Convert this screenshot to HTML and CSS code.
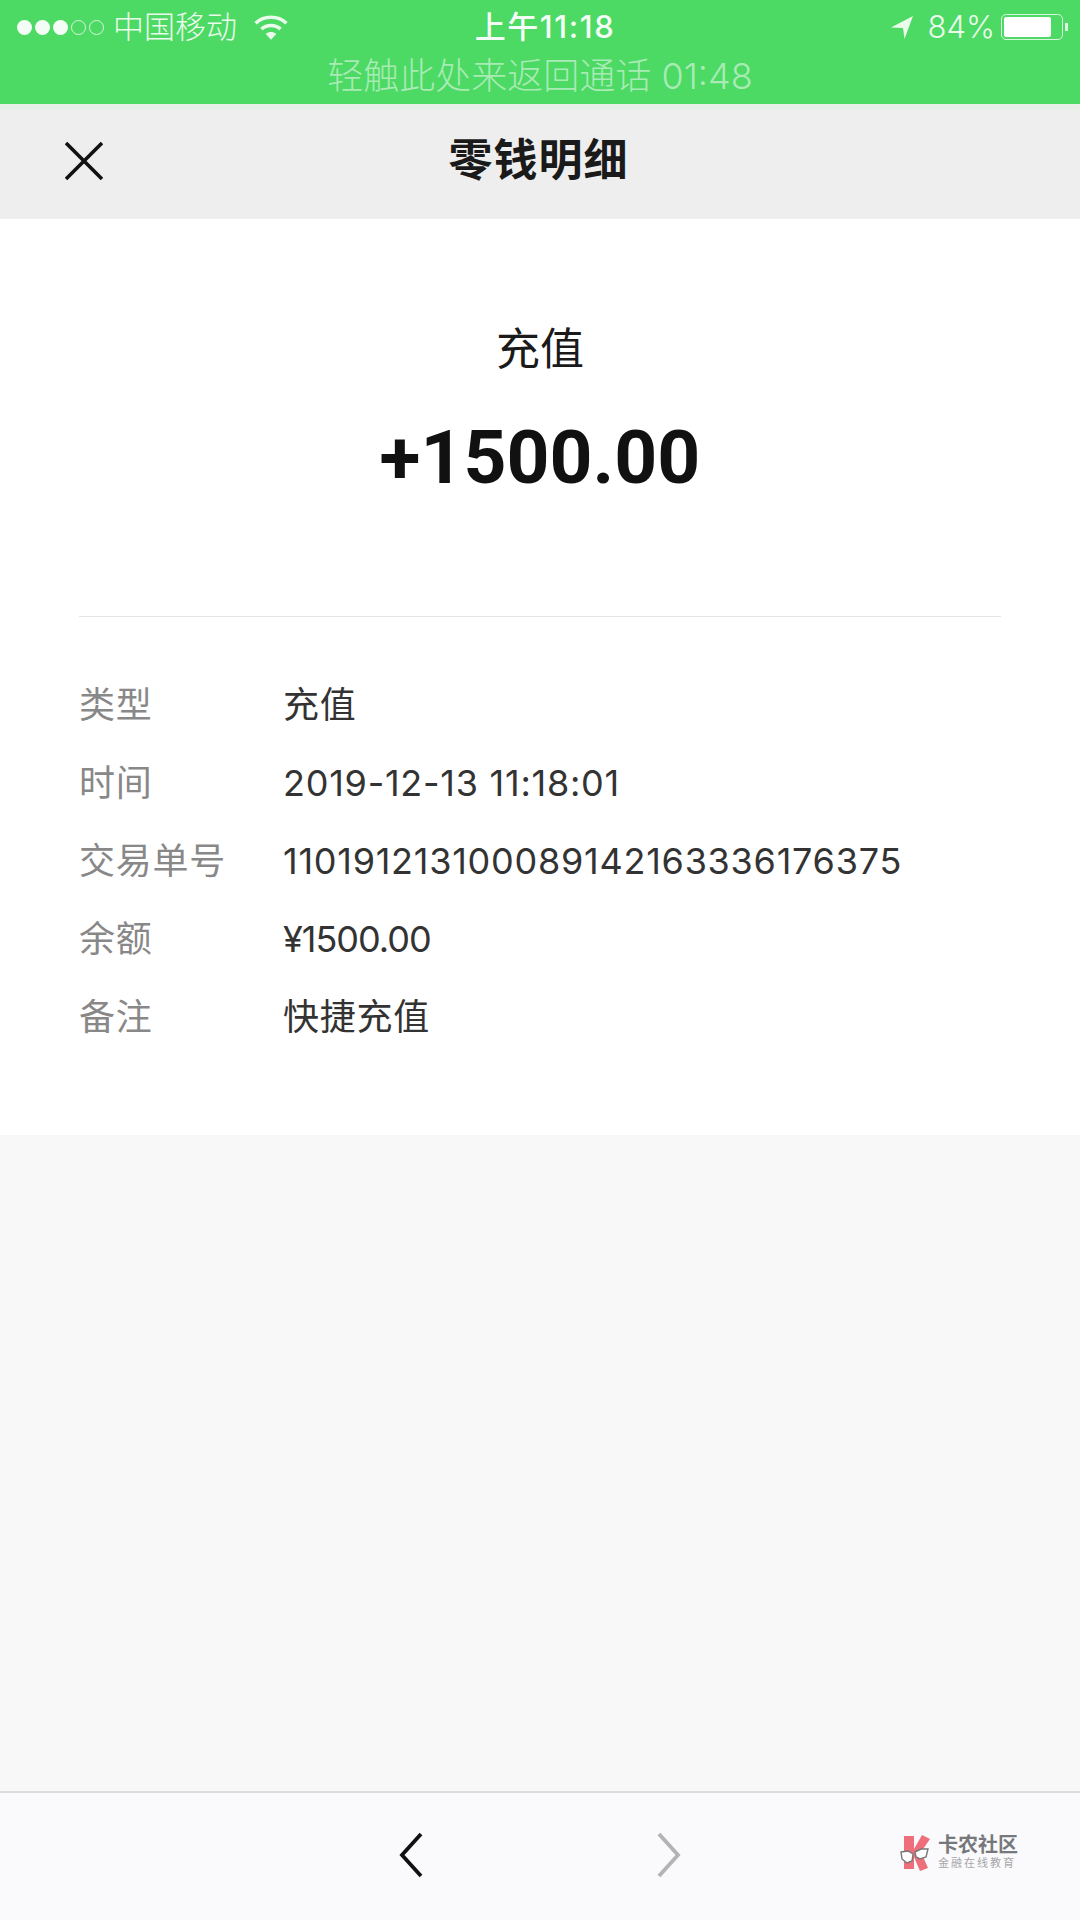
FILE: index.html
```html
<!DOCTYPE html>
<html lang="zh-CN">
<head>
    <meta charset="UTF-8">
    <meta name="viewport" content="width=device-width, initial-scale=1.0">
    <title>零钱明细</title>
    <link rel="stylesheet" href="styles.css">
</head>
<body>

    <header class="call-bar">
        <div class="status-row">
            <div class="status-left">
                <span class="signal">
                    <i class="dot"></i><i class="dot"></i><i class="dot"></i><i class="dot empty"></i><i class="dot empty"></i>
                </span>
                <span class="carrier">中国移动</span>
                <svg class="wifi" width="34" height="26" viewBox="0 0 32 24">
                    <path d="M1.5 8.5C9.5 1 22.5 1 30.5 8.5" fill="none" stroke="#eafbec" stroke-width="3.4"/>
                    <path d="M7 14C12 9.5 20 9.5 25 14" fill="none" stroke="#eafbec" stroke-width="3.4"/>
                    <path d="M11 18.5C14 16 18 16 21 18.5L16 24Z" fill="#eafbec"/>
                </svg>
            </div>
            <div class="status-time">上午11:18</div>
            <div class="status-right">
                <svg class="arrow" width="24" height="24" viewBox="0 0 24 24">
                    <path d="M23 1L1 12.5L13 13L14.5 24Z" fill="#eafbec"/>
                </svg>
                <span class="percent">84%</span>
                <span class="battery"><span class="battery-level"></span></span>
                <span class="battery-tip"></span>
            </div>
        </div>
        <div class="call-hint">轻触此处来返回通话 01:48</div>
    </header>

    <nav class="nav-bar">
        <svg class="close" width="38" height="38" viewBox="0 0 38 38">
            <path d="M1 1L37 37M37 1L1 37" stroke="#111" stroke-width="3.6" fill="none"/>
        </svg>
        <h1>零钱明细</h1>
    </nav>

    <main class="detail">
        <div class="summary">
            <div class="summary-type">充值</div>
            <div class="summary-amount">+1500.00</div>
        </div>
        <dl class="rows">
            <div class="row"><dt>类型</dt><dd>充值</dd></div>
            <div class="row"><dt>时间</dt><dd>2019-12-13 11:18:01</dd></div>
            <div class="row"><dt>交易单号</dt><dd>110191213100089142163336176375</dd></div>
            <div class="row"><dt>余额</dt><dd class="balance">¥1500.00</dd></div>
            <div class="row"><dt>备注</dt><dd>快捷充值</dd></div>
        </dl>
    </main>

    <div class="filler"></div>

    <footer class="toolbar">
        <svg class="chevron" width="26" height="46" viewBox="0 0 26 46">
            <path d="M23 2L4 23L23 44" stroke="#111" stroke-width="3.8" fill="none"/>
        </svg>
        <svg class="chevron next" width="26" height="46" viewBox="0 0 26 46">
            <path d="M3 2L22 23L3 44" stroke="#b3b3b3" stroke-width="3.8" fill="none"/>
        </svg>
        <div class="logo">
            <svg class="logo-mark" width="36" height="36" viewBox="0 0 34 36">
                <path d="M4 1H14V34H4Z" fill="#ee6f7b"/>
                <path d="M14 14L22 0L30 4L21 17L28 33L20 36L14 22Z" fill="#ee6f7b"/>
                <path d="M1 17L8 16L13 19L12 26L7 28L2 24Z" fill="#fff" stroke="#777" stroke-width="1.4"/>
                <path d="M15 17L21 14L28 14L26 22L20 24L16 22Z" fill="#fff" stroke="#777" stroke-width="1.4"/>
            </svg>
            <div class="logo-text">
                <div class="logo-name">卡农社区</div>
                <div class="logo-sub">金融在线教育</div>
            </div>
        </div>
    </footer>

</body>
</html>
```

FILE: styles.css
```css
* {
    box-sizing: border-box;
}

body {
    font-family: "Inter", "Noto Sans CJK SC", sans-serif;
    background-color: #f8f8f9;
    color: #333;
    margin: 0;
    width: 1080px;
    height: 1920px;
    display: flex;
    flex-direction: column;
}

.call-bar {
    height: 104px;
    background-color: #4cd964;
    color: #eafbec;
    padding: 8px 0 0 17px;
}

.status-row {
    display: grid;
    grid-template-columns: 1fr auto 1fr;
    align-items: center;
    height: 38px;
}

.status-left,
.status-right {
    display: flex;
    align-items: center;
}

.status-left {
    gap: 9px;
}

.signal {
    display: flex;
    gap: 3px;
}

.dot {
    width: 15px;
    height: 15px;
    border-radius: 50%;
    background-color: #f4fdf5;
}

.dot.empty {
    background-color: transparent;
    border: 1px solid #d8f6dd;
}

.carrier {
    font-size: 31px;
    line-height: 38px;
    font-weight: 300;
}

.wifi {
    margin-left: 8px;
}

.status-time {
    font-size: 31px;
    line-height: 38px;
    font-weight: 500;
    letter-spacing: 1.6px;
    color: #f4fdf5;
    margin-right: 7px;
}

.status-right {
    justify-content: flex-end;
    padding-right: 12px;
}

.arrow {
    margin-right: 14px;
}

.percent {
    font-size: 31px;
    line-height: 38px;
    font-weight: 300;
    margin-right: 6px;
}

.battery {
    width: 62px;
    height: 26px;
    border: 1px solid #d8f6dd;
    border-radius: 5px;
    padding: 2px;
}

.battery-level {
    display: block;
    width: 84%;
    height: 100%;
    background-color: #fff;
    border-radius: 2px;
}

.battery-tip {
    width: 3px;
    height: 8px;
    margin-left: 2px;
    background-color: #d8f6dd;
}

.call-hint {
    text-align: center;
    font-size: 36px;
    font-weight: 300;
    line-height: 44px;
    margin-left: -17px;
    margin-top: 8px;
    color: #a8ebb4;
}

.nav-bar {
    height: 115px;
    border-top: 6px solid #e8efe9;
    background-color: #eeeeee;
    position: relative;
    display: flex;
    align-items: center;
    justify-content: center;
    padding: 0 3px 10px 0;
}

.nav-bar h1 {
    margin: 0;
    font-size: 44px;
    line-height: 60px;
    font-weight: 700;
    letter-spacing: 1px;
    color: #1a1a1a;
}

.close {
    position: absolute;
    left: 65px;
    top: 32px;
}

.detail {
    height: 916px;
    background-color: #fff;
    padding: 0 79px;
}

.summary {
    height: 398px;
    border-bottom: 1px solid #e4e4e4;
    padding-top: 101px;
    text-align: center;
}

.summary-type {
    font-size: 44px;
    line-height: 58px;
    color: #1a1a1a;
}

.summary-amount {
    font-family: "Roboto", sans-serif;
    font-size: 75px;
    line-height: 92px;
    font-weight: 700;
    color: #111;
    margin-top: 33px;
}

.rows {
    margin: 49px 0 0;
}

.row {
    display: flex;
    align-items: center;
    height: 78px;
    font-size: 36px;
    line-height: 50px;
    letter-spacing: 0.75px;
}

.row dt {
    width: 204px;
    color: #888;
}

.row dd {
    margin: 0;
    color: #333;
}

.row dd.balance {
    letter-spacing: -1px;
}

.filler {
    flex: 1;
}

.toolbar {
    height: 129px;
    border-top: 2px solid #dcdcdc;
    background-color: #fafafc;
    display: flex;
    align-items: center;
    padding-left: 398px;
}

.chevron {
    margin-bottom: 3px;
}

.chevron.next {
    margin-left: 232px;
}

.logo {
    display: flex;
    align-items: center;
    gap: 3px;
    margin-left: 217px;
    margin-bottom: 8px;
}

.logo-name {
    font-size: 20px;
    line-height: 22px;
    font-weight: 700;
    color: #77787b;
}

.logo-sub {
    font-size: 11px;
    line-height: 15px;
    letter-spacing: 2px;
    color: #a6a6a8;
}
```
